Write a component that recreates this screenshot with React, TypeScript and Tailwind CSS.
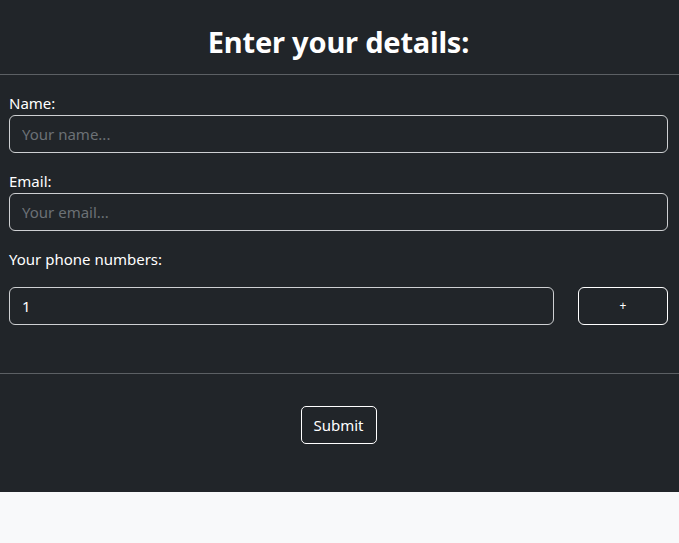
export default function App() {
  return (
    <div className="min-h-screen bg-[#f8f9fa] font-['Noto_Sans',sans-serif]">
      <div className="bg-[#212529] text-white">
        <div className="flex h-[74px] items-center justify-center pt-[8px] pl-[9px] pr-[11px]">
          <h2 className="text-[29px] font-bold leading-none tracking-[-0.2px]">Enter your details:</h2>
        </div>
        <div className="h-px bg-[#5c6064]" />
        <form className="flex flex-col pl-[9px] pr-[11px] pt-4 pb-12">
          <label className="text-[15px] leading-6">Name:</label>
          <input
            placeholder="Your name..."
            className="h-[38px] rounded-md border border-[#ced0d2] bg-transparent px-3 text-[15px] text-white outline-none placeholder:text-[#6c7176]"
          />
          <label className="mt-4 text-[15px] leading-6">Email:</label>
          <input
            placeholder="Your email..."
            className="h-[38px] rounded-md border border-[#ced0d2] bg-transparent px-3 text-[15px] text-white outline-none placeholder:text-[#6c7176]"
          />
          <label className="mt-4 text-[15px] leading-6">Your phone numbers:</label>
          <div className="mt-4 flex gap-6">
            <input
              defaultValue="1"
              className="h-[38px] flex-1 rounded-md border border-[#ced0d2] bg-transparent px-3 text-[15px] text-white outline-none"
            />
            <button
              type="button"
              className="h-[38px] w-[90px] rounded-md border border-white text-[12px] leading-none"
            >
              +
            </button>
          </div>
        </form>
        <div className="h-px bg-[#5c6064]" />
        <div className="flex justify-center pt-[32px] pb-[48px] pl-[9px] pr-[11px]">
          <button className="h-[38px] w-[76px] rounded-[5px] border border-white text-[15px]">Submit</button>
        </div>
      </div>
    </div>
  );
}
